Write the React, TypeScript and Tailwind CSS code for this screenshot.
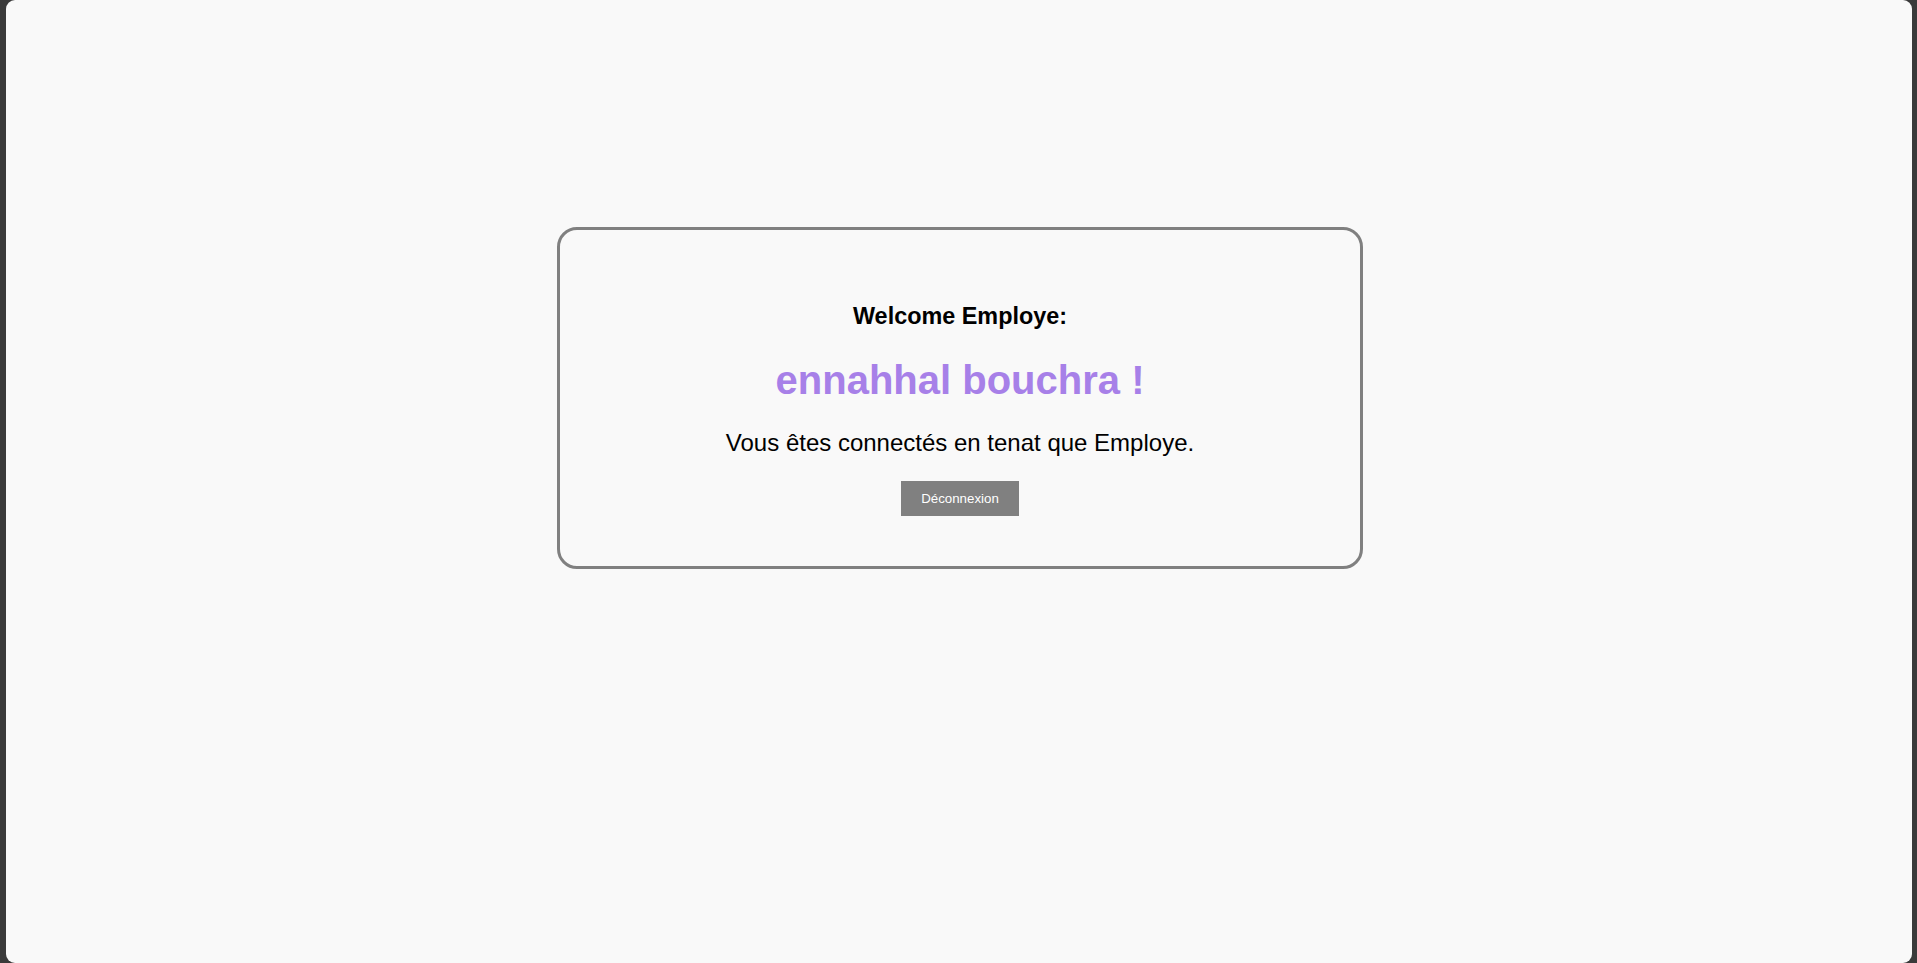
export default function App() {
  return (
    <div className="h-screen w-full bg-[#3a3a3a] pl-[6px] pr-[5px] flex font-['Liberation_Sans',Arial,sans-serif]">
      {/* page panel */}
      <div className="flex-1 bg-[#f9f9f9] rounded-[9px] flex justify-center pt-[227px] pl-[2px]">
        {/* welcome card */}
        <div className="w-[806px] h-[342px] border-[3px] border-[#808080] rounded-[20px] flex flex-col items-center pt-[73px]">
          <h3 className="text-[23.4px] leading-[27px] font-bold text-black">Welcome Employe:</h3>
          <h1 className="mt-[27px] text-[40px] leading-[46px] font-bold text-[#a780e8]">ennahhal bouchra !</h1>
          <p className="mt-[26px] text-[24px] leading-[28px] text-black">Vous êtes connectés en tenat que Employe.</p>
          <button className="mt-[24px] w-[118px] h-[35px] bg-[#808080] text-white text-[13.3px] font-medium flex items-center justify-center">
            Déconnexion
          </button>
        </div>
      </div>
    </div>
  );
}
